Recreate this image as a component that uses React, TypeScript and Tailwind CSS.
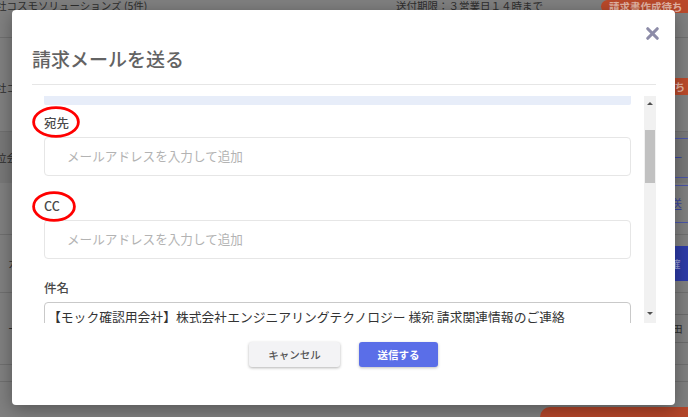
import { X } from 'lucide-react';

const font = "font-['Noto_Sans_CJK_JP','Noto_Sans',sans-serif]";

function Ellipse({ w, h }: { w: number; h: number }) {
  return (
    <svg width={w} height={h} viewBox={`0 0 ${w} ${h}`} className="pointer-events-none">
      <ellipse
        cx={w / 2}
        cy={h / 2}
        rx={w / 2 - 1.6}
        ry={h / 2 - 1.6}
        fill="none"
        stroke="#ff0000"
        strokeWidth={2.8}
      />
    </svg>
  );
}

function Field({
  label,
  circle,
  className,
}: {
  label: string;
  circle: 'to' | 'cc';
  className: string;
}) {
  return (
    <div className={className}>
      <div className="relative h-[20px] text-[12.5px] leading-[20px] font-medium text-[#4a4a4a]">
        {label}
        {circle === 'to' ? (
          <div className="absolute -left-[12px] -top-[7px]">
            <Ellipse w={48} h={32} />
          </div>
        ) : (
          <div className="absolute -left-[12px] -top-[5px]">
            <Ellipse w={44} h={31} />
          </div>
        )}
      </div>
      <div className="mt-[4px] flex h-[39px] items-center rounded-[4px] border border-[#e6e6e6] bg-white pl-[22px] text-[12.6px] text-[#b3b3b3]">
        メールアドレスを入力して追加
      </div>
    </div>
  );
}

function Background() {
  return (
    <div className="flex h-full w-full flex-col bg-[#808080] text-[10.5px] text-[#2e2e2e]">
      <div className="flex h-[38px] shrink-0 items-start border-b border-[#707070]">
        <div className="-ml-[4px] w-[400px] leading-[12px]">社コスモソリューションズ (5件)</div>
        <div className="w-[205px] leading-[12px]">送付期限：３営業日１４時まで</div>
        <div className="h-[13px] flex-1 rounded-bl-[7px] rounded-tl-[7px] bg-[#bb4a2b] pl-[8px] text-[10.5px] leading-[13px] font-bold text-[#e4b4a4]">
          請求書作成待ち
        </div>
      </div>
      <div className="flex h-[94px] shrink-0 items-start justify-between border-b border-[#707070]">
        <div className="-ml-[4px] mt-[42px]">社コスモ</div>
        <div className="mt-[40px] h-[17px] w-[30px] rounded-l-[8px] bg-[#bb4a2b] pl-[6px] text-[10.5px] leading-[17px] font-bold text-[#e4b4a4]">
          待ち
        </div>
      </div>
      <div className="flex h-[51px] shrink-0 items-center justify-between bg-[#787878]">
        <div className="-ml-[4px]">位会社</div>
        <div className="h-[40px] w-[22px] border-y border-[#4b56a8] pl-[6px] leading-[38px] text-[#3b46a0]">ー</div>
      </div>
      <div className="flex h-[52px] shrink-0 items-start justify-between border-b border-[#707070]">
        <div />
        <div className="mt-[2px] h-[38px] w-[22px] border-y border-[#4b56a8] pl-[4px] text-[12px] leading-[36px] text-[#3b46a0]">送</div>
      </div>
      <div className="flex h-[58px] shrink-0 items-center justify-between border-b border-[#707070]">
        <div className="ml-[8px]">カ</div>
        <div className="h-[35px] w-[22px] bg-[#2d3ba8] pl-[4px] leading-[35px] text-[#9aa2d8]">確</div>
      </div>
      <div className="flex h-[72px] shrink-0 items-center justify-between border-b border-[#707070]">
        <div className="ml-[8px]">ー</div>
        <div className="h-[29px] w-[22px] border-y border-[#6c6c6c] pl-[6px] leading-[27px]">田</div>
      </div>
      <div className="h-[17px] shrink-0 border-b border-[#707070]" />
      <div className="flex flex-1 items-end justify-end">
        <div className="h-[10px] w-[148px] rounded-tl-[10px] bg-[#b4462a]" />
      </div>
    </div>
  );
}

export default function App() {
  return (
    <div className={`relative h-[417px] w-[688px] overflow-hidden ${font}`}>
      <Background />

      <div className="absolute left-[12px] top-[10px] flex h-[395px] w-[663px] flex-col rounded-[4px] bg-white shadow-[0_4px_18px_rgba(0,0,0,0.35)]">
        <button className="absolute right-[13px] top-[14px] text-[#8d8ca8]" aria-label="close">
          <X className="h-[19px] w-[19px]" strokeWidth={4} />
        </button>

        <div className="mx-[20px] mr-[19px] border-b border-[#e6e6e6] pt-[37px] pb-[13px]">
          <h1 className="text-[19px] leading-[24px] font-medium text-[#636363]">請求メールを送る</h1>
        </div>

        <div className="mx-[20px] mr-[19px] mt-[11px] flex h-[227px] overflow-hidden">
          <div className="flex-1 pl-[12px] pr-[13px]">
            <div className="h-[9px] rounded-b-[2px] bg-[#e7edf9]" />
            <Field label="宛先" circle="to" className="mt-[8px]" />
            <Field label="CC" circle="cc" className="mt-[20px]" />
            <div className="mt-[19px]">
              <div className="h-[20px] text-[12.5px] leading-[20px] font-medium text-[#4a4a4a]">件名</div>
              <div className="mt-[4px] h-[40px] rounded-[4px] border border-[#c9c9c9] pl-[3px] pt-[6px] text-[12.8px] leading-[16px] whitespace-nowrap text-[#333]">
                【モック確認用会社】株式会社エンジニアリングテクノロジー 様宛 請求関連情報のご連絡
              </div>
            </div>
          </div>

          <div className="flex w-[12px] flex-col items-center bg-[#f1f1f1]">
            <div className="mt-[6px] h-0 w-0 border-x-[3px] border-b-[3px] border-x-transparent border-b-[#505050]" />
            <div className="mt-[25px] h-[53px] w-[10px] bg-[#c1c1c1]" />
            <div className="flex-1" />
            <div className="mb-[8px] h-0 w-0 border-x-[3px] border-t-[3px] border-x-transparent border-t-[#505050]" />
          </div>
        </div>

        <div className="mt-[19px] flex justify-center gap-[19px]">
          <button className="h-[25px] w-[91px] rounded-[3px] bg-[#f3f3f5] text-[10.5px] font-medium text-[#555] shadow-[0_1px_3px_rgba(0,0,0,0.3)]">
            キャンセル
          </button>
          <button className="h-[25px] w-[79px] rounded-[3px] bg-[#5a6ee8] text-[10.5px] font-bold text-white shadow-[0_1px_3px_rgba(0,0,0,0.25)]">
            送信する
          </button>
        </div>
      </div>
    </div>
  );
}
